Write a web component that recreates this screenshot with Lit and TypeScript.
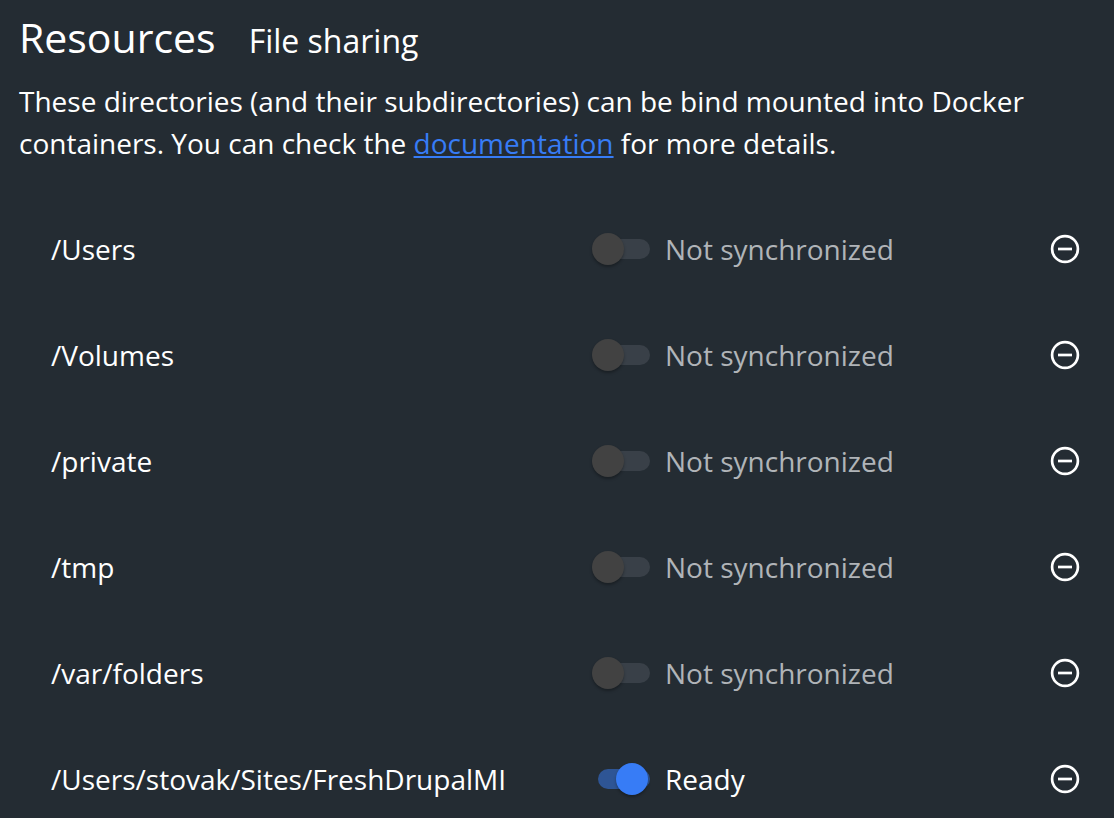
import { LitElement, html, css } from "lit";
import { customElement, state } from "lit/decorators.js";

interface SharedDirectory {
  path: string;
  synced: boolean;
}

@customElement("app-root")
export class AppRoot extends LitElement {
  static styles = css`
    :host {
      display: block;
      box-sizing: border-box;
      min-height: 100vh;
      padding: 9px 19px 0;
      background: #242c33;
      color: #ffffff;
      font-family: "Open Sans", sans-serif;
      font-size: 28px;
      line-height: 42px;
    }
    header {
      display: flex;
      align-items: baseline;
      gap: 33px;
    }
    h1,
    h2,
    p,
    ul {
      margin: 0;
      padding: 0;
      font-weight: 400;
    }
    h1 {
      font-size: 41px;
      line-height: 56px;
    }
    h2 {
      font-size: 32px;
    }
    .intro {
      margin-top: 15px;
    }
    a {
      color: #377cf6;
      text-underline-offset: 2px;
      text-decoration-thickness: 2px;
      text-decoration-skip-ink: none;
    }
    .list {
      list-style: none;
      margin-top: 32px;
    }
    .row {
      display: grid;
      grid-template-columns: minmax(0, 541fr) minmax(0, 457fr) auto;
      align-items: center;
      height: 106px;
      padding: 0 14px 0 32px;
    }
    .sync {
      display: flex;
      align-items: center;
      gap: 15px;
      color: #b0b4b8;
    }
    .sync.on {
      color: #ffffff;
    }
    .switch {
      appearance: none;
      position: relative;
      width: 58px;
      height: 32px;
      margin: 0;
      cursor: pointer;
    }
    .switch::before {
      content: "";
      position: absolute;
      inset: 6px 0 6px 6px;
      border-radius: 10px;
      background: #394048;
    }
    .switch::after {
      content: "";
      position: absolute;
      left: 0;
      top: 0;
      width: 32px;
      height: 32px;
      border-radius: 50%;
      background: #424242;
      box-shadow: 0 2px 3px rgba(0, 0, 0, 0.3);
    }
    .switch:checked::before {
      background: #2e5595;
    }
    .switch:checked::after {
      left: 24px;
      background: #377cf6;
    }
    .remove {
      display: block;
      width: 32px;
      height: 32px;
      padding: 0;
      border: 0;
      background: none;
      color: inherit;
      cursor: pointer;
    }
    .remove svg {
      display: block;
    }
  `;

  @state() private directories: SharedDirectory[] = [
    { path: "/Users", synced: false },
    { path: "/Volumes", synced: false },
    { path: "/private", synced: false },
    { path: "/tmp", synced: false },
    { path: "/var/folders", synced: false },
    { path: "/Users/stovak/Sites/FreshDrupalMI", synced: true },
  ];

  private toggle(target: SharedDirectory) {
    this.directories = this.directories.map((d) =>
      d === target ? { ...d, synced: !d.synced } : d
    );
  }

  private remove(target: SharedDirectory) {
    this.directories = this.directories.filter((d) => d !== target);
  }

  render() {
    return html`
      <header>
        <h1>Resources</h1>
        <h2>File sharing</h2>
      </header>
      <p class="intro">
        These directories (and their subdirectories) can be bind mounted into
        Docker containers. You can check the <a href="#">documentation</a> for
        more details.
      </p>
      <ul class="list">
        ${this.directories.map(
          (d) => html`
            <li class="row">
              <span>${d.path}</span>
              <label class="sync ${d.synced ? "on" : ""}">
                <input
                  class="switch"
                  type="checkbox"
                  role="switch"
                  .checked=${d.synced}
                  @change=${() => this.toggle(d)}
                />
                <span>${d.synced ? "Ready" : "Not synchronized"}</span>
              </label>
              <button
                class="remove"
                aria-label="Remove ${d.path}"
                @click=${() => this.remove(d)}
              >
                <svg width="32" height="32" viewBox="0 0 32 32" fill="none" stroke="currentColor">
                  <circle cx="16" cy="16" r="12.9" stroke-width="2.7" />
                  <path d="M9 16h14" stroke-width="2.7" />
                </svg>
              </button>
            </li>
          `
        )}
      </ul>
    `;
  }
}
